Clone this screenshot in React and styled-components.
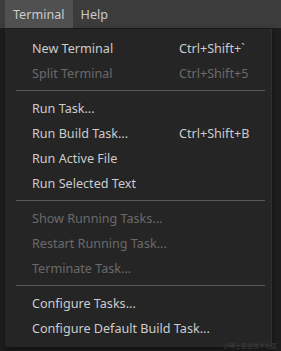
import React from "react";
import styled, { createGlobalStyle } from "styled-components";

const Global = createGlobalStyle`
  html, body { margin: 0; padding: 0; background: #1f1f1f; }
  body { font-family: "Noto Sans", "Open Sans", sans-serif; }
`;

const Page = styled.div`
  position: relative;
  width: 281px;
  height: 351px;
  background: #1e1e1e;
  overflow: hidden;
`;

const MenuBar = styled.div`
  display: flex;
  align-items: stretch;
  height: 28px;
  padding-left: 5px;
  background: #3c3c3c;
`;

const BarItem = styled.div`
  display: flex;
  align-items: center;
  padding: 0 8px;
  font-size: 12.6px;
  color: #cccccc;
  background: ${(p) => (p.$active ? "#505050" : "transparent")};
`;

const Dropdown = styled.div`
  margin: 1px 0 0 5px;
  width: 267px;
  box-sizing: border-box;
  padding: 7px 0 6px;
  background: #252526;
  border-right: 1px solid #303030;
  box-shadow: 0 2px 6px rgba(0, 0, 0, 0.5);
`;

const Item = styled.div`
  display: grid;
  grid-template-columns: 147px auto;
  align-items: center;
  height: 25px;
  padding-left: 27px;
  font-size: 12.6px;
  white-space: nowrap;
  color: ${(p) => (p.$disabled ? "#6a6a6a" : "#cccccc")};
`;

const Label = styled.span`
  white-space: nowrap;
  overflow: visible;
`;

const Key = styled.span`
  white-space: nowrap;
`;

const Separator = styled.div`
  height: 1px;
  margin: 4px 6px 5px 11px;
  background: #575757;
`;

const Watermark = styled.div`
  position: absolute;
  right: 4px;
  bottom: 1px;
  font-size: 6px;
  color: #3e3e3e;
  font-family: "Noto Sans CJK SC", sans-serif;
`;

const groups = [
  [
    ["New Terminal", "Ctrl+Shift+`"],
    ["Split Terminal", "Ctrl+Shift+5", true],
  ],
  [
    ["Run Task..."],
    ["Run Build Task...", "Ctrl+Shift+B"],
    ["Run Active File"],
    ["Run Selected Text"],
  ],
  [
    ["Show Running Tasks...", null, true],
    ["Restart Running Task...", null, true],
    ["Terminate Task...", null, true],
  ],
  [["Configure Tasks..."], ["Configure Default Build Task..."]],
];

export default function App() {
  return (
    <Page>
      <Global />
      <MenuBar>
        <BarItem $active>Terminal</BarItem>
        <BarItem>Help</BarItem>
      </MenuBar>
      <Dropdown>
        {groups.map((g, gi) => (
          <React.Fragment key={gi}>
            {gi > 0 && <Separator />}
            {g.map(([label, key, disabled]) => (
              <Item key={label} $disabled={disabled}>
                <Label>{label}</Label>
                {key && <Key>{key}</Key>}
              </Item>
            ))}
          </React.Fragment>
        ))}
      </Dropdown>
      <Watermark>@稀土掘金技术社区</Watermark>
    </Page>
  );
}
